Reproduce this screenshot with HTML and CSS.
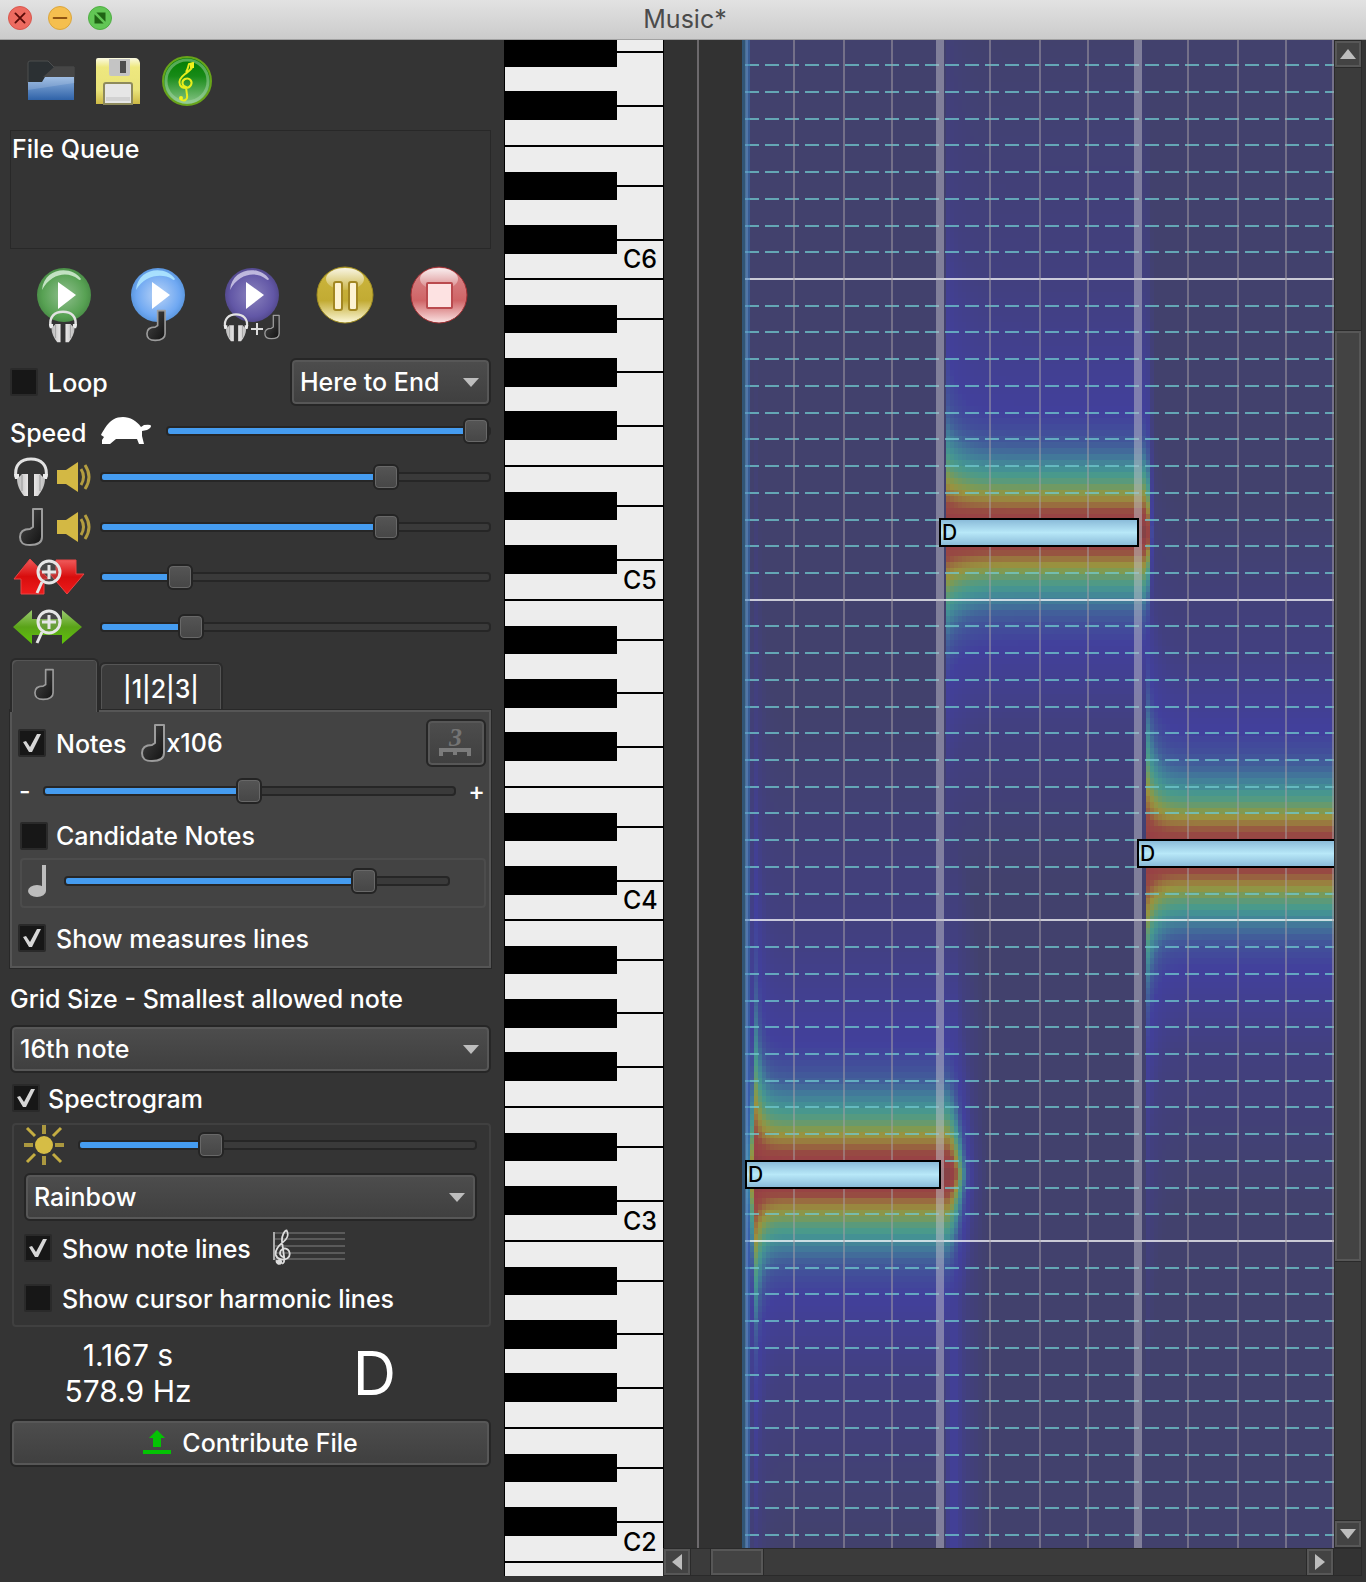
FILE: index.html
```html
<!DOCTYPE html>
<html lang="en">
<head>
<meta charset="utf-8">
<title>Music*</title>
<link rel="stylesheet" href="styles.css">
</head>
<body>
<svg class="defs" width="0" height="0" aria-hidden="true">
  <defs>
    <linearGradient id="steel" x1="0" y1="0" x2="1" y2="0">
      <stop offset="0" stop-color="#b9b9b9"/><stop offset=".5" stop-color="#f4f2f2"/><stop offset="1" stop-color="#bdbdbd"/>
    </linearGradient>
    <linearGradient id="noteFill" x1="0" y1="0" x2="1" y2="1">
      <stop offset="0" stop-color="#4a4a4a"/><stop offset="1" stop-color="#121212"/>
    </linearGradient>
    <linearGradient id="gloss" x1="0" y1="0" x2="0" y2="1">
      <stop offset="0" stop-color="#fff" stop-opacity=".85"/><stop offset="1" stop-color="#fff" stop-opacity=".1"/>
    </linearGradient>
    <radialGradient id="gGreen"><stop offset="0" stop-color="#8fbf8d"/><stop offset=".8" stop-color="#57a153"/><stop offset="1" stop-color="#4b8f48"/></radialGradient>
    <radialGradient id="gBlue"><stop offset="0" stop-color="#b9d3f6"/><stop offset=".8" stop-color="#6fa8f2"/><stop offset="1" stop-color="#5b97df"/></radialGradient>
    <radialGradient id="gPurple"><stop offset="0" stop-color="#8a82bd"/><stop offset=".8" stop-color="#6257a6"/><stop offset="1" stop-color="#544a8f"/></radialGradient>
    <linearGradient id="gGold" x1="0" y1="0" x2="0" y2="1"><stop offset="0" stop-color="#cdb73e"/><stop offset=".6" stop-color="#c2ab33"/><stop offset="1" stop-color="#fdf9dc"/></linearGradient>
    <linearGradient id="gRose" x1="0" y1="0" x2="0" y2="1"><stop offset="0" stop-color="#d98a8c"/><stop offset=".6" stop-color="#cf6466"/><stop offset="1" stop-color="#fbe4e4"/></linearGradient>
    <symbol id="headphones" viewBox="0 0 36 40">
      <path d="M3 20C1 8 8 2 18 2s17 6 15 18" fill="none" stroke="#e2e2e2" stroke-width="3"/>
      <path d="M1 17h5v5h-4z M35 17h-5v5h4z" fill="#ececec"/>
      <path d="M4 22l5-5h6v22h-4C7 34 4 28 4 22z M32 22l-5-5h-6v22h4c4-5 7-11 7-17z" fill="url(#steel)"/>
      <path d="M9 18v16M27 18v16" stroke="#9a9a9a" stroke-width="1"/>
    </symbol>
    <symbol id="note" viewBox="0 0 26 40">
      <path d="M15 2h9v28c0 6-5 8-12 8S2 36 2 30s4-8 10-8l3-2z" fill="url(#noteFill)" stroke="#9c9c9c" stroke-width="2" stroke-linejoin="round"/>
    </symbol>
    <symbol id="speaker" viewBox="0 0 36 32">
      <path d="M1 9h9L22 1v30L10 23H1z" fill="#d3b844"/>
      <path d="M25 8q5 8 0 16M29 4q8 12 0 24" fill="none" stroke="#b39d40" stroke-width="3"/>
    </symbol>
    <symbol id="magnifier" viewBox="0 0 28 36">
      <circle cx="15" cy="13" r="11" fill="#888" fill-opacity=".25" stroke="#e6e6e6" stroke-width="3"/>
      <path d="M15 6v14M8 13h14" stroke="#e6e6e6" stroke-width="3"/>
      <path d="M8 23L3 34" stroke="#e6e6e6" stroke-width="3"/>
    </symbol>
    <symbol id="clef" viewBox="0 0 20 42">
      <path d="M8 38c-3 2-6 0-5-3M9 39c3-1 3-4 2-9L9 15C8 8 12 2 14 2c3 5 0 10-4 13-5 4-9 8-8 14 1 5 8 7 13 4 4-3 3-10-3-11-4 0-6 4-5 7 1 2 3 3 5 2" fill="none" stroke="currentColor" stroke-width="2"/>
      <circle cx="6" cy="37" r="3" fill="currentColor"/>
    </symbol>
    <symbol id="octave" viewBox="0 0 160 322">
      <rect x="0" y="0" width="160" height="322" fill="#ededed"/>
      <path d="M0 0h160M113 40h47M113 93h47M113 147h47M0 187h160M113 227h47M113 281h47" stroke="#000" stroke-width="2"/>
      <path d="M0 26h113v28H0zM0 79h113v29H0zM0 132h113v29H0zM0 213h113v28H0zM0 266h113v29H0z"/>
    </symbol>
  </defs>
</svg>

<header class="titlebar">
  <div class="lights">
    <button type="button" class="light light-close" aria-label="Close"><svg viewBox="0 0 24 24"><path d="M7 7l10 10M17 7L7 17" stroke="#5a0b08" stroke-width="2" stroke-linecap="round"/></svg></button>
    <button type="button" class="light light-min" aria-label="Minimize"><svg viewBox="0 0 24 24"><path d="M5 12h14" stroke="#8f5412" stroke-width="2" stroke-linecap="round"/></svg></button>
    <button type="button" class="light light-full" aria-label="Full screen"><svg viewBox="0 0 24 24"><path d="M6 8v10h10zM8 6h10v10z" fill="#1f6414"/></svg></button>
  </div>
  <h1 class="title">Music*</h1>
</header>

<main class="workspace">
  <aside class="sidebar">
    <div class="toolbar">
      <button type="button" class="plain" aria-label="Open">
        <svg width="50" height="50" viewBox="0 0 50 50">
          <defs><linearGradient id="fold" x1="0" y1="0" x2="0" y2="1"><stop offset="0" stop-color="#8fb3df"/><stop offset="1" stop-color="#2f62a8"/></linearGradient></defs>
          <path d="M2 7q0-2 2-2h18l6 6h20v16H2z" fill="#2b3033" stroke="#4c4e4f"/>
          <path d="M28 11h20v10H17z" fill="#464646"/>
          <path d="M2 26h14l3-5h29v23H2z" fill="url(#fold)"/>
          <path d="M2 26h14l3-5h29v6L2 34z" fill="#fff" fill-opacity=".15"/>
        </svg>
      </button>
      <button type="button" class="plain" aria-label="Save">
        <svg width="50" height="50" viewBox="0 0 50 50">
          <defs><linearGradient id="flop" x1="0" y1="0" x2="0" y2="1"><stop offset="0" stop-color="#fbfae2"/><stop offset=".2" stop-color="#eee87f"/><stop offset=".7" stop-color="#e9e37a"/><stop offset="1" stop-color="#cdb945"/></linearGradient></defs>
          <path d="M4 2h37q4 0 5 5v41H2V4q0-2 2-2z" fill="url(#flop)"/>
          <path d="M15 3h21v15q0 2-2 2H17q-2 0-2-2z" fill="#c4c4c4"/><path d="M26 5h6v12h-6z" fill="#4d4d4d"/>
          <path d="M10 48V29q0-2 2-2h24q2 0 2 2v19z" fill="#e6e6e6" stroke="#8e8a5c" stroke-width="2"/><path d="M12 41h24v4H12z" fill="#d2d2d2"/>
        </svg>
      </button>
      <button type="button" class="plain" aria-label="Export music">
        <svg width="50" height="50" viewBox="0 0 50 50">
          <defs><linearGradient id="disc" x1="0" y1="0" x2="0" y2="1"><stop offset="0" stop-color="#007c00"/><stop offset=".4" stop-color="#178a17"/><stop offset="1" stop-color="#8cc78c"/></linearGradient></defs>
          <circle cx="25" cy="25" r="24" fill="url(#disc)" stroke="#68a41a" stroke-width="2"/>
          <circle cx="25" cy="25" r="21" fill="none" stroke="#a5d6a5" stroke-opacity=".5" stroke-width="3"/>
          <path d="M18 43c4 3 8 1 7-4l-1-8c-4-1-5-6-1-8 4-2 8 2 6 6s-9 4-11 0 1-8 5-11 9-6 8-11l-4 1c-1 3-1 5-3 8" fill="none" stroke="#e8ee1c" stroke-width="2"/><circle cx="19" cy="42" r="2" fill="#f2f21c"/><path d="M28 7h4v5h-4z" fill="#f2f21c"/>
        </svg>
      </button>
    </div>

    <section class="queue">File Queue</section>

    <div class="transport">
      <button type="button" class="plain" aria-label="Play audio">
        <svg width="60" height="80" viewBox="0 0 60 80"><circle cx="30" cy="30" r="27" fill="url(#gGreen)"/><path d="M8 25C10 2 38 0 47 14q-1 2-3 0C34 6 17 8 8 25z" fill="#dff2de" fill-opacity=".8"/><path d="M24 17v27l18-14z" fill="#fff"/><use href="#headphones" x="14" y="45" width="30" height="33"/></svg>
      </button>
      <button type="button" class="plain" aria-label="Play notes">
        <svg width="60" height="80" viewBox="0 0 60 80"><circle cx="30" cy="30" r="27" fill="url(#gBlue)"/><path d="M8 25C10 2 38 0 47 14q-1 2-3 0C34 8 17 10 8 25z" fill="#aee6ff" fill-opacity=".9"/><path d="M24 17v27l18-14z" fill="#fff"/><use href="#note" x="16" y="44" width="24" height="33"/></svg>
      </button>
      <button type="button" class="plain" aria-label="Play audio and notes">
        <svg width="60" height="80" viewBox="0 0 60 80"><circle cx="30" cy="30" r="27" fill="url(#gPurple)"/><path d="M8 25C10 2 38 0 47 14q-1 2-3 0C34 6 17 8 8 25z" fill="#d6d1ec" fill-opacity=".8"/><path d="M24 17v27l18-14z" fill="#fff"/><use href="#headphones" x="0" y="48" width="28" height="29"/><path d="M29 64h12M35 58v12" stroke="#ddd" stroke-width="2"/><use href="#note" x="40" y="49" width="20" height="26"/></svg>
      </button>
      <button type="button" class="plain" aria-label="Pause">
        <svg width="60" height="80" viewBox="0 0 60 80"><circle cx="30" cy="30" r="28" fill="url(#gGold)" stroke="#a08d22"/><ellipse cx="30" cy="14" rx="19" ry="11" fill="url(#gloss)"/><rect x="19" y="17" width="8" height="28" rx="2" fill="#fdf3d2" stroke="#a28722" stroke-width="2"/><rect x="34" y="17" width="8" height="28" rx="2" fill="#fdf3d2" stroke="#a28722" stroke-width="2"/></svg>
      </button>
      <button type="button" class="plain" aria-label="Stop">
        <svg width="60" height="80" viewBox="0 0 60 80"><circle cx="30" cy="30" r="28" fill="url(#gRose)" stroke="#a02f33"/><ellipse cx="30" cy="14" rx="19" ry="11" fill="url(#gloss)"/><rect x="18" y="18" width="25" height="25" rx="1" fill="#fde2e2" stroke="#ba4a4e" stroke-width="2"/></svg>
      </button>
    </div>

    <div class="row row-loop">
      <label class="check"><input type="checkbox"><span>Loop</span></label>
      <span class="combo combo-range"><select aria-label="Play range"><option>Here to End</option></select></span>
    </div>

    <div class="row row-speed">
      <label for="speed">Speed</label>
      <svg width="52" height="28" viewBox="0 0 52 28"><path d="M1 18c1-3 3-5 4-7C10 3 16 0 23 0s14 4 18 10l3-2q7-1 7 1t-4 4l-5 1v5l2 8h-5l-2-5H16l-6 5H2v-4l2-3z" fill="#fff"/></svg>
      <input id="speed" class="slider" type="range" value="100" style="--fill:100%">
    </div>
    <div class="row row-slider">
      <span class="icons"><svg width="36" height="40"><use href="#headphones"/></svg><svg width="36" height="32"><use href="#speaker"/></svg></span>
      <input class="slider" type="range" value="75" style="--fill:75%" aria-label="Audio volume">
    </div>
    <div class="row row-slider">
      <span class="icons"><svg width="36" height="40"><use href="#note"/></svg><svg width="36" height="32"><use href="#speaker"/></svg></span>
      <input class="slider" type="range" value="75" style="--fill:75%" aria-label="Notes volume">
    </div>
    <div class="row row-slider">
      <span class="icons">
        <svg width="76" height="40" viewBox="3 0 76 40"><defs><linearGradient id="red" x1="0" y1="0" x2="0" y2="1"><stop offset="0" stop-color="#ef5a5a"/><stop offset=".5" stop-color="#d80d0d"/><stop offset="1" stop-color="#ee1c1c"/></linearGradient></defs>
        <path d="M20 2L4 22h7v15h23V22h5z" fill="url(#red)" stroke="#e84545"/><path d="M46 3h20v14h8L57 37 40 17h6z" fill="url(#red)" stroke="#e84545"/><use href="#magnifier" x="24" y="2" width="28" height="36"/></svg>
      </span>
      <input class="slider" type="range" value="18" style="--fill:18%" aria-label="Vertical zoom">
    </div>
    <div class="row row-slider">
      <span class="icons">
        <svg width="76" height="40" viewBox="3 0 76 40"><defs><linearGradient id="lime" x1="0" y1="0" x2="0" y2="1"><stop offset="0" stop-color="#9ccb72"/><stop offset=".5" stop-color="#5aa318"/><stop offset="1" stop-color="#5fc40a"/></linearGradient></defs>
        <path d="M3 20L22 3v9h30V3l20 17-20 17v-9H22v9z" fill="url(#lime)"/><use href="#magnifier" x="24" y="2" width="28" height="36"/></svg>
      </span>
      <input class="slider" type="range" value="21" style="--fill:21%" aria-label="Horizontal zoom">
    </div>

    <div class="tabs" role="tablist">
      <button type="button" class="tab tab-active" role="tab" aria-selected="true" aria-label="Notes"><svg width="22" height="33"><use href="#note"/></svg></button>
      <button type="button" class="tab" role="tab" aria-selected="false">|1|2|3|</button>
    </div>
    <section class="panel">
      <div class="row row-notes">
        <label class="check"><input type="checkbox" checked><span>Notes</span></label>
        <svg width="26" height="40"><use href="#note"/></svg><span>x106</span>
        <button type="button" class="push triplet" aria-label="Triplet">
          <svg width="36" height="34" viewBox="0 0 36 34"><text x="11" y="20" class="three">3</text><path d="M3 30v-6h28v6M17 24v5" fill="none" stroke="#7b7b7b" stroke-width="4"/></svg>
        </button>
      </div>
      <div class="row row-amount">
        <span>-</span>
        <input class="slider" type="range" value="50" style="--fill:50%" aria-label="Number of notes">
        <span>+</span>
      </div>
      <div class="row row-candidate">
        <label class="check"><input type="checkbox"><span>Candidate Notes</span></label>
      </div>
      <div class="frame frame-candidate">
        <svg width="20" height="34" viewBox="0 0 20 34"><path d="M14 1h4v26h-4z" fill="#bdbdbd"/><ellipse cx="9" cy="27" rx="9" ry="6" fill="#bdbdbd"/></svg>
        <input class="slider" type="range" value="80" style="--fill:80%" aria-label="Candidate threshold">
      </div>
      <div class="row row-measures">
        <label class="check"><input type="checkbox" checked><span>Show measures lines</span></label>
      </div>
    </section>

    <label class="grid-label" for="grid-size">Grid Size - Smallest allowed note</label>
    <span class="combo"><select id="grid-size"><option>16th note</option></select></span>

    <div class="row row-spectrogram">
      <label class="check"><input type="checkbox" checked><span>Spectrogram</span></label>
    </div>
    <section class="frame frame-spectrogram">
      <div class="row row-bright">
        <svg width="40" height="40" viewBox="0 0 40 40"><circle cx="20" cy="20" r="9" fill="#d6bd45"/><path d="M20 0v9M20 31v9M0 20h9M31 20h9" stroke="#ab983f" stroke-width="4"/><path d="M3 3l8 8M29 29l8 8M37 3l-8 8M11 29l-8 8" stroke="#c4ad42" stroke-width="3"/></svg>
        <input class="slider" type="range" value="32" style="--fill:32%" aria-label="Brightness">
      </div>
      <span class="combo"><select aria-label="Colours"><option>Rainbow</option></select></span>
      <div class="row">
        <label class="check"><input type="checkbox" checked><span>Show note lines</span></label>
        <svg class="staff" width="72" height="42" viewBox="0 0 72 42"><path d="M0 6h72M0 12h72M0 19h72M0 26h72M0 32h72" stroke="#5a5a5a" stroke-width="2"/><path d="M1 5v28" stroke="#aaa" stroke-width="2"/><use href="#clef" x="1" y="0" width="18" height="41"/></svg>
      </div>
      <div class="row">
        <label class="check"><input type="checkbox"><span>Show cursor harmonic lines</span></label>
      </div>
    </section>

    <div class="readout">
      <p class="numbers">1.167 s<br>578.9 Hz</p>
      <p class="pitch">D</p>
    </div>
    <button type="button" class="push contribute">
      <svg width="28" height="26" viewBox="0 0 28 26"><path d="M14 0l8 8h-4v9h-8V8H6z" fill="#04c304"/><path d="M0 20h28v4H0z" fill="#04c304"/></svg>
      Contribute File
    </button>
  </aside>

  <svg class="keyboard" shape-rendering="crispEdges" role="img" aria-label="Piano keyboard">
    <use href="#octave" y="-81" width="160" height="322"/>
    <use href="#octave" y="239" width="160" height="322"/>
    <use href="#octave" y="560" width="160" height="322"/>
    <use href="#octave" y="880" width="160" height="322"/>
    <use href="#octave" y="1201" width="160" height="322"/>
    <use href="#octave" y="1522" width="160" height="322"/>
    <path d="M0 239h160M0 560h160M0 880h160M0 1201h160M0 1522h160" stroke="#000" stroke-width="2"/>
    <path d="M0 0v1536M160 0v1536" stroke="#000" stroke-width="2"/>
    <g class="key-names"><text x="119" y="228">C6</text><text x="119" y="549">C5</text><text x="119" y="869">C4</text><text x="119" y="1190">C3</text><text x="119" y="1511">C2</text></g>
  </svg>

  <section class="roll">
    <div class="roll-view">
      <canvas class="spectrum"></canvas>
      <div class="roll-note note-1">D</div>
      <div class="roll-note note-2">D</div>
      <div class="roll-note note-3">D</div>
    </div>
    <div class="vbar">
      <button type="button" class="arrow" aria-label="Scroll up"><svg width="16" height="10"><path d="M8 0l8 10H0z" fill="#bdbdbd"/></svg></button>
      <div class="vtrack"><div class="thumb vthumb"></div></div>
      <button type="button" class="arrow" aria-label="Scroll down"><svg width="16" height="10"><path d="M0 0h16L8 10z" fill="#bdbdbd"/></svg></button>
    </div>
    <div class="hbar">
      <button type="button" class="arrow" aria-label="Scroll left"><svg width="10" height="16"><path d="M10 0v16L0 8z" fill="#bdbdbd"/></svg></button>
      <div class="htrack"><div class="thumb hthumb"></div></div>
      <button type="button" class="arrow" aria-label="Scroll right"><svg width="10" height="16"><path d="M0 0v16l10-8z" fill="#bdbdbd"/></svg></button>
    </div>
    <div class="corner"></div>
  </section>
</main>
<script src="roll.js"></script>
</body>
</html>
```

FILE: styles.css
```css
* { box-sizing: border-box; }

body {
  margin: 0;
  min-height: 100vh;
  display: flex;
  flex-direction: column;
  background: #343434;
  color: #fff;
  font-family: Inter, "Liberation Sans", sans-serif;
  font-size: 25px;
  font-weight: 500;
  line-height: 32px;
}

svg { display: block; flex: none; }
.defs { position: absolute; }
p { margin: 0; }
button, select { font: inherit; color: inherit; }

/* Title bar */
.titlebar {
  display: grid;
  grid-template-columns: 1fr auto 1fr;
  align-items: center;
  height: 40px;
  padding: 0 4px 4px 8px;
  background: linear-gradient(#e2e2e2, #cbcbcb);
  border-bottom: 1px solid #a2a2a2;
}
.title { margin: 0; padding-top: 2px; font-size: 25px; font-weight: 400; line-height: 32px; color: #4b4b4b; }
.lights { display: flex; gap: 16px; }
.light { width: 24px; height: 24px; padding: 0; border: 1px solid; border-radius: 50%; }
.light svg { width: 22px; height: 22px; fill: none; }
.light-close { background: #ed6b60; border-color: #d9564d; }
.light-min { background: #f5bf4f; border-color: #dba63d; }
.light-full { background: #62c655; border-color: #4fae43; }

.workspace {
  flex: 1;
  display: grid;
  grid-template-columns: 504px 160px minmax(0, 1fr);
  padding: 0 4px 6px 0;
}

/* Sidebar */
.sidebar { display: flex; flex-direction: column; padding: 0 13px 0 10px; }
.plain { padding: 0; border: 0; background: none; }
.toolbar { display: flex; align-items: center; gap: 18px; height: 90px; padding: 0 16px 8px; }
.queue { height: 119px; padding: 2px 1px; border: 1px solid #282828; }
.transport { display: flex; justify-content: space-between; height: 109px; padding: 16px 22px 0 24px; }
.transport .plain { align-self: flex-start; }
.row { display: flex; align-items: center; height: 50px; }
.row-loop { height: 48px; justify-content: space-between; }
.row-speed { height: 46px; gap: 14px; padding-top: 4px; }
.row-speed label { padding-top: 3px; }
.row-slider { height: 50px; gap: 10px; }
.icons { display: flex; align-items: center; gap: 7px; width: 80px; padding-left: 3px; }

.check { display: flex; align-items: center; gap: 10px; }
.check span { padding-top: 2px; }
.check input {
  appearance: none;
  position: relative;
  width: 28px;
  height: 28px;
  margin: 0;
  background: #171717;
  border: 2px solid #2a2a2a;
  border-radius: 2px;
}
.check input:checked::after {
  content: "";
  position: absolute;
  inset: 0;
  background: #d6d6d6;
  clip-path: polygon(3px 11px, 6px 10px, 10px 16px, 17px 3px, 21px 3px, 12px 21px, 9px 21px);
}

.combo { position: relative; display: block; height: 48px; }
.combo::after {
  content: "";
  position: absolute;
  right: 12px;
  top: 20px;
  width: 16px;
  height: 9px;
  background: #bdbdbd;
  clip-path: polygon(0 0, 100% 0, 50% 100%);
}
.combo select, .push {
  appearance: none;
  border: 2px solid #262626;
  border-radius: 6px;
  background: linear-gradient(#4d4d4d, #3f3f3f);
  box-shadow: inset 0 0 0 2px #575757;
}
.combo select { width: 100%; height: 48px; padding: 0 8px; }
.combo-range { width: 201px; }

.slider {
  appearance: none;
  flex: 1;
  min-width: 0;
  height: 26px;
  margin: 0;
  background: none;
}
.slider::-webkit-slider-runnable-track {
  height: 10px;
  border: 2px solid #262626;
  border-radius: 4px;
  background: linear-gradient(#459cf0, #459cf0) 0 0 / var(--fill) 100% no-repeat #3a3a3a;
}
.slider::-webkit-slider-thumb {
  appearance: none;
  width: 26px;
  height: 26px;
  margin-top: -10px;
  border: 2px solid #242424;
  border-radius: 6px;
  background: linear-gradient(#555, #464646);
  box-shadow: inset 0 0 0 1px #686868;
}

/* Notes tab */
.tabs { display: flex; align-items: flex-end; height: 58px; }
.tab {
  width: 124px;
  height: 48px;
  padding: 4px 0 0;
  border: 2px solid #2a2a2a;
  border-bottom: 0;
  border-radius: 6px 6px 0 0;
  background: #3b3b3b;
  box-shadow: inset 2px 2px 0 -1px #555, inset -1px 0 0 #555;
}
.tab-active {
  position: relative;
  width: 89px;
  height: 54px;
  margin-bottom: -2px;
  padding: 0 0 4px 21px;
  background: #434343;
}
.panel {
  height: 258px;
  padding: 6px 3px 0 6px;
  border: 2px solid #565656;
  outline: 1px solid #282828;
  background: #434343;
}
.row-notes .check { margin-right: 14px; }
.push { display: flex; align-items: center; justify-content: center; padding: 0; height: 48px; }
.triplet { width: 60px; margin-left: auto; }
.three { font: italic bold 26px "Liberation Serif", serif; fill: #747474; }
.row-amount { height: 46px; gap: 12px; padding: 0 1px; }
.row-candidate { height: 44px; padding-left: 2px; }
.row-candidate .check, .row-spectrogram .check { gap: 8px; }
.row-candidate .check span { padding-top: 0; }
.frame { border: 2px solid #404040; border-radius: 4px; }
.frame-candidate {
  display: flex;
  align-items: center;
  gap: 16px;
  height: 50px;
  margin-left: 2px;
  padding: 0 34px 4px 6px;
  border-color: #4c4c4c;
}
.row-measures { height: 60px; }

.grid-label { height: 57px; padding-top: 15px; }
.row-spectrogram { padding-left: 2px; }
.frame-spectrogram { height: 204px; margin-left: 2px; padding: 0 12px 0 10px; }
.row-bright { height: 48px; gap: 14px; padding-bottom: 8px; }
.frame-spectrogram .combo { margin-bottom: 2px; }
.staff { margin-left: 22px; color: #ddd; }

.readout { display: grid; grid-template-columns: 236px 1fr; align-items: center; height: 92px; text-align: center; font-weight: 400; }
.numbers { font-size: 30px; line-height: 36px; }
.pitch { padding-left: 12px; font-size: 60px; line-height: 72px; }
.contribute { gap: 11px; }

/* Keyboard */
.keyboard { width: 160px; height: 1536px; overflow: hidden; }
.key-names { font-size: 25px; fill: #000; }

/* Piano roll */
.roll {
  display: grid;
  grid-template-columns: minmax(0, 1fr) 28px;
  grid-template-rows: minmax(0, 1fr) 28px;
  height: 1536px;
}
.roll-view { position: relative; overflow: hidden; background: #323232; }
.spectrum { display: block; width: 100%; height: 100%; }
.roll-note {
  position: absolute;
  height: 29px;
  padding-left: 1px;
  border: 2px solid #000;
  background: linear-gradient(#8bbcd9, #b8e8f8 50%, #8bbcd9);
  color: #000;
  font-size: 21px;
  line-height: 26px;
}
.note-1 { left: 81px; top: 1120px; width: 196px; }
.note-2 { left: 275px; top: 478px; width: 200px; }
.note-3 { left: 473px; top: 799px; width: 400px; }

.vbar, .hbar { display: flex; background: #3b3b3b; border: 1px solid #2a2a2a; }
.vbar { flex-direction: column; }
.hbar { border-width: 1px 1px 1px 0; }
.arrow {
  display: flex;
  align-items: center;
  justify-content: center;
  width: 26px;
  height: 26px;
  padding: 0;
  border: 2px solid #575757;
  outline: 1px solid #2a2a2a;
  background: #434343;
}
.vtrack { flex: 1; display: flex; flex-direction: column; padding-top: 264px; }
.htrack { flex: 1; padding-left: 21px; }
.thumb { border: 2px solid #575757; outline: 1px solid #2a2a2a; background: #434343; }
.vthumb { height: 930px; }
.hthumb { width: 52px; height: 26px; }
.corner { background: #333; border: 1px solid #2a2a2a; border-left: 0; }
```

FILE: roll.js
```js
const canvas = document.querySelector('.spectrum');

// Colour of a cell by its distance from the sounding pitch.
const ramp = [
  [0, 127, 66, 70], [12, 152, 65, 69], [20, 151, 76, 66], [27, 153, 115, 63],
  [34, 153, 146, 63], [40, 127, 154, 82], [47, 95, 154, 118], [54, 74, 154, 139],
  [61, 67, 143, 150], [72, 66, 120, 154], [82, 66, 96, 154], [95, 66, 79, 154],
  [115, 66, 64, 156], [150, 66, 64, 144], [195, 66, 64, 128], [350, 66, 65, 109]
];

const sounds = [
  { start: 82, end: 282, y: 1134, up: 1.13, down: 1.05, tail: 0.2, attack: 0.8, peak: 10, reach: 6, fade: 0.8 },
  { start: 284, end: 482, y: 492, up: 1.04, down: 0.98, tail: 2.8, attack: 0.35, peak: 0, reach: 14, fade: 0.65 },
  { start: 482, end: 9999, y: 813, up: 1.06, down: 1, tail: 1, attack: 0.7, peak: 2, reach: 8, fade: 1.1 }
];

function colour(d) {
  for (let i = 1; i < ramp.length; i++) {
    if (d < ramp[i][0]) {
      const a = ramp[i - 1], b = ramp[i], t = (d - a[0]) / (b[0] - a[0]);
      return `rgb(${[1, 2, 3].map(k => Math.round(a[k] + (b[k] - a[k]) * t))})`;
    }
  }
  return 'rgb(66,65,109)';
}

function distance(s, x, y) {
  if (x < s.start) return 999;
  const above = y < s.y;
  let d = Math.abs(y - s.y) / (above ? s.up : s.down);
  if (above && d > 120) d = 120 + (d - 120) * s.fade;

  // The attack spreads over neighbouring pitches, then settles.
  const since = x - s.start - s.peak;
  d /= 1 + s.attack * Math.exp(-Math.abs(since) / s.reach);
  if (since < 0) d += since * since * 0.6 + 14;

  if (x > s.end) {
    const over = x - s.end;
    const far = d;
    d += s.tail * over * over;
    if (s.tail < 1) {
      const band = 118 + Math.abs(over - 8) * 7 + (above ? Math.max(0, far - 130) : 0);
      d = Math.min(d, band);
    }
  }
  return d;
}

function draw() {
  const w = canvas.width = canvas.clientWidth;
  const h = canvas.height = canvas.clientHeight;
  const g = canvas.getContext('2d');

  for (let x = 82; x < w; x += 4) {
    for (let y = 0; y < h; y += 6) {
      g.fillStyle = colour(Math.min(...sounds.map(s => distance(s, x + 2, y + 3))));
      g.fillRect(x, y, 4, 6);
    }
  }

  // One line per semitone; a solid one under each C.
  for (let n = -8; n < 48; n++) {
    const y = Math.round(239 + n * 320.67 / 12) - 1;
    if (n % 12 === 0) {
      g.fillStyle = 'rgba(255,255,255,.72)';
      g.fillRect(81, y, w, 2);
    } else {
      g.fillStyle = 'rgba(112,200,205,.75)';
      for (let x = 81; x < w; x += 20) g.fillRect(x, y, 14, 2);
    }
  }

  // Beats, with a broad line at each measure.
  g.fillStyle = 'rgba(165,160,165,.5)';
  g.fillRect(33, 0, 2, h);
  for (let m = 78; m < w; m += 198) {
    const shift = m > 78 ? 0 : 2;
    for (const b of [49, 99, 147]) g.fillRect(m + b + shift, 0, 2, h);
    if (m > 78) {
      g.fillStyle = 'rgba(190,190,200,.5)';
      g.fillRect(m - 4, 0, 8, h);
      g.fillStyle = 'rgba(165,160,165,.5)';
    }
  }
  g.fillRect(w - 2, 0, 2, h);

  // Playback cursor.
  g.fillStyle = 'rgba(48,120,185,.5)';
  g.fillRect(78, 0, 8, h);
  g.fillStyle = 'rgba(140,180,220,.3)';
  g.fillRect(81, 0, 3, h);
}

draw();
window.addEventListener('resize', draw);
```
